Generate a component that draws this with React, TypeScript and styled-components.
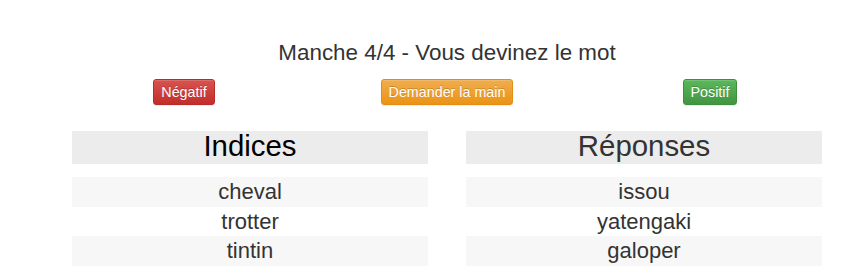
import React from "react";
import styled, { createGlobalStyle, css } from "styled-components";

const Global = createGlobalStyle`
  html, body { margin: 0; padding: 0; background: #fff; }
  body { font-family: "Liberation Sans", Arial, sans-serif; color: #333; }
`;

const Page = styled.div`
  width: 750px;
  margin-left: 72px;
  padding-top: 40px;
`;

const Title = styled.h4`
  margin: 0;
  font-size: 22.4px;
  line-height: 26px;
  font-weight: 400;
  text-align: center;
  color: #333;
`;

const ButtonRow = styled.div`
  display: grid;
  grid-template-columns: repeat(3, 1fr);
  justify-items: center;
  margin: 13px -19.5px 0;
`;

const variants = {
  danger: css`
    background-image: linear-gradient(to bottom, #d9534f 0, #c12e2a 100%);
    border-color: #b92c28;
  `,
  warning: css`
    background-image: linear-gradient(to bottom, #f0ad4e 0, #eb9316 100%);
    border-color: #e38d13;
  `,
  success: css`
    background-image: linear-gradient(to bottom, #5cb85c 0, #419641 100%);
    border-color: #3e8f3e;
  `,
};

const Button = styled.button<{ $variant: keyof typeof variants }>`
  font-family: "Liberation Sans", Arial, sans-serif;
  font-size: 14.3px;
  line-height: 20px;
  padding: 2px 7px;
  border: 1px solid transparent;
  border-radius: 3px;
  color: #fff;
  text-shadow: 0 -1px 0 rgba(0, 0, 0, 0.2);
  box-shadow: inset 0 1px 0 rgba(255, 255, 255, 0.15), 0 1px 1px rgba(0, 0, 0, 0.075);
  cursor: pointer;
  ${(p) => variants[p.$variant]}
`;

const Columns = styled.div`
  display: grid;
  grid-template-columns: 356px 356px;
  column-gap: 38px;
  margin-top: 26px;
`;

const Panel = styled.div`
  display: flex;
  flex-direction: column;
`;

const Heading = styled.h2<{ $dark?: boolean }>`
  margin: 0 0 13px;
  background: #ececec;
  font-size: 29.4px;
  font-weight: 400;
  line-height: 30px;
  padding-bottom: 3px;
  text-align: center;
  color: ${(p) => (p.$dark ? "#000" : "#333")};
`;

const Item = styled.div<{ $striped: boolean }>`
  font-size: 22px;
  line-height: 29.67px;
  text-align: center;
  color: #333;
  background: ${(p) => (p.$striped ? "#f7f7f7" : "#fff")};
`;

const hints = ["cheval", "trotter", "tintin"];
const answers = ["issou", "yatengaki", "galoper"];

export default function App() {
  return (
    <>
      <Global />
      <Page>
        <Title>Manche 4/4 - Vous devinez le mot</Title>
        <ButtonRow>
          <Button $variant="danger">Négatif</Button>
          <Button $variant="warning">Demander la main</Button>
          <Button $variant="success">Positif</Button>
        </ButtonRow>
        <Columns>
          <Panel>
            <Heading $dark>Indices</Heading>
            {hints.map((h, i) => (
              <Item key={h} $striped={i % 2 === 0}>
                {h}
              </Item>
            ))}
          </Panel>
          <Panel>
            <Heading>Réponses</Heading>
            {answers.map((a, i) => (
              <Item key={a} $striped={i % 2 === 0}>
                {a}
              </Item>
            ))}
          </Panel>
        </Columns>
      </Page>
    </>
  );
}
